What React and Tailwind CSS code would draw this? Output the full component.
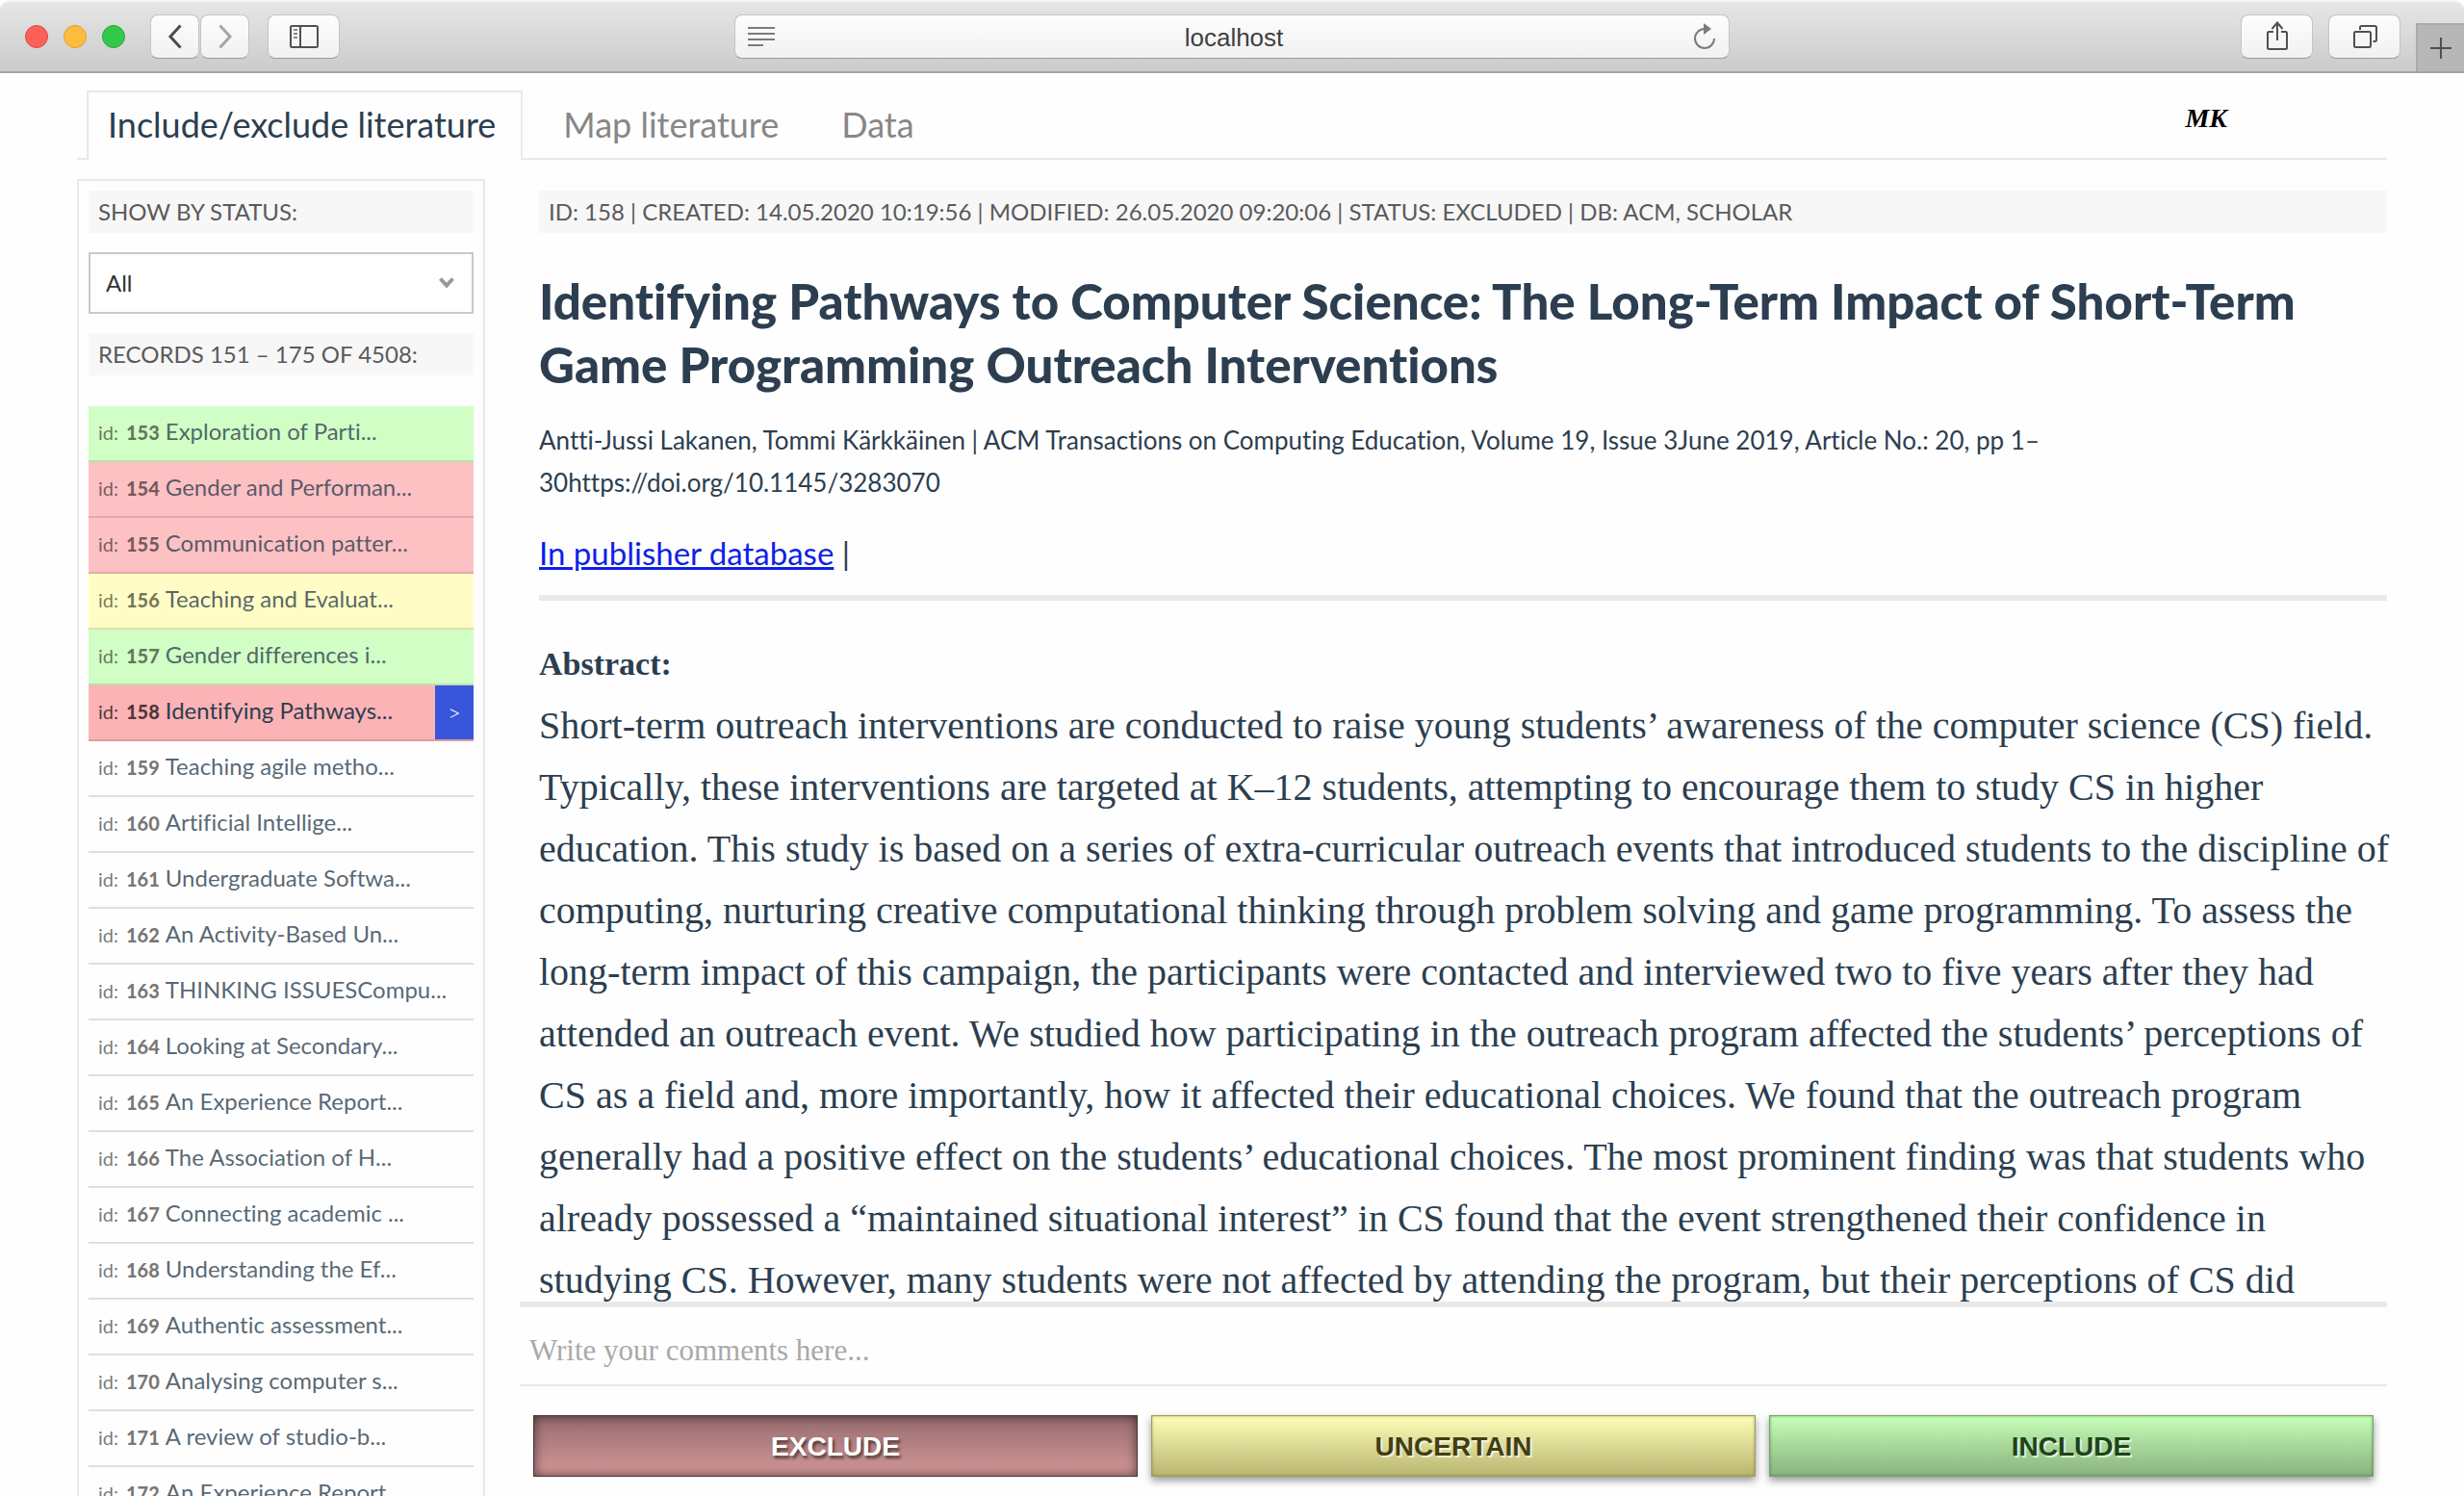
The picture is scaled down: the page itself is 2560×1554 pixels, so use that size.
import React, { useState } from "react";

const SANS = "font-['Lato','Liberation_Sans',sans-serif]";
const SERIF = "font-['Liberation_Serif',serif]";

const ROW_COLOURS = {
  included: "bg-[#d1fec5]",
  excluded: "bg-[#fdc1c4]",
  uncertain: "bg-[#fffdc5]",
  open: "",
};

const RECORDS = [
  [153, "Exploration of Parti...", "included"],
  [154, "Gender and Performan...", "excluded"],
  [155, "Communication patter...", "excluded"],
  [156, "Teaching and Evaluat...", "uncertain"],
  [157, "Gender differences i...", "included"],
  [158, "Identifying Pathways...", "excluded"],
  [159, "Teaching agile metho...", "open"],
  [160, "Artificial Intellige...", "open"],
  [161, "Undergraduate Softwa...", "open"],
  [162, "An Activity-Based Un...", "open"],
  [163, "THINKING ISSUESCompu...", "open"],
  [164, "Looking at Secondary...", "open"],
  [165, "An Experience Report...", "open"],
  [166, "The Association of H...", "open"],
  [167, "Connecting academic ...", "open"],
  [168, "Understanding the Ef...", "open"],
  [169, "Authentic assessment...", "open"],
  [170, "Analysing computer s...", "open"],
  [171, "A review of studio-b...", "open"],
  [172, "An Experience Report...", "open"],
];

const TOOL =
  "flex h-[46px] items-center justify-center rounded-[8px] border border-[#c4c4c4] border-b-[#9c9c9c] bg-linear-to-b from-[#fdfdfd] to-[#f1f1f1]";

function Toolbar() {
  return (
    <header className="grid h-[76px] shrink-0 grid-cols-[1fr_1034px_1fr] items-center rounded-t-[10px] border-t-2 border-b-2 border-t-[#f4f4f4] border-b-[#a3a3a3] bg-linear-to-b from-[#e6e6e6] to-[#cbcbcb]">
      <div className="flex items-center pl-[26px]">
        <div className="flex gap-4">
          <button aria-label="Close" className="size-6 rounded-full border border-[#e2463f] bg-[#fc605b]" />
          <button aria-label="Minimise" className="size-6 rounded-full border border-[#dfa023] bg-[#fdbc40]" />
          <button aria-label="Zoom" className="size-6 rounded-full border border-[#27a934] bg-[#34c84a]" />
        </div>
        <div className="ml-[26px] flex gap-px">
          <button aria-label="Back" className={`${TOOL} w-[51px]`}>
            <svg width="16" height="26" viewBox="0 0 16 26" fill="none" stroke="#4c4c4c" strokeWidth="3">
              <path d="M13.500 1.500 3 13l10.500 11.500" />
            </svg>
          </button>
          <button aria-label="Forward" className={`${TOOL} w-[51px]`}>
            <svg width="16" height="26" viewBox="0 0 16 26" fill="none" stroke="#a6a6a6" strokeWidth="3">
              <path d="M2.500 1.500 13 13 2.500 24.500" />
            </svg>
          </button>
        </div>
        <button aria-label="Show sidebar" className={`${TOOL} ml-[19px] w-[75px]`}>
          <svg width="30" height="24" viewBox="0 0 30 24" fill="none" stroke="#505050" strokeWidth="2">
            <rect x="1" y="1" width="28" height="22" rx="1.500" />
            <path d="M11 1v22" />
            <path d="M4 5h4M4 9h4M4 13h4" stroke="#8a8a8a" />
          </svg>
        </button>
      </div>

      <div className={`${TOOL} gap-4 px-[13px]`}>
        <svg width="28" height="20" viewBox="0 0 28 20" stroke="#7b7b7b" strokeWidth="2">
          <path d="M0 1h28M0 7h28M0 13h28M0 19h16" />
        </svg>
        <input
          aria-label="Address"
          defaultValue="localhost"
          className="min-w-0 flex-1 bg-transparent pt-[2px] text-center font-['Liberation_Sans',sans-serif] text-[26px] text-[#404040] outline-none"
        />
        <button aria-label="Reload">
          <svg width="24" height="28" viewBox="0 0 24 28" fill="none" stroke="#7b7b7b" strokeWidth="2">
            <path d="M12 6a10 10 0 1 0 10 10" />
            <path d="M11 0v12l8-6z" fill="#7b7b7b" stroke="none" />
          </svg>
        </button>
      </div>

      <div className="flex items-center justify-end gap-4 self-stretch">
        <button aria-label="Share" className={`${TOOL} w-[75px]`}>
          <svg width="24" height="32" viewBox="0 0 24 32" fill="none" stroke="#505050" strokeWidth="2">
            <path d="M8 11H3.500a1.500 1.500 0 0 0-1.500 1.500v15A1.500 1.500 0 0 0 3.500 29h17a1.500 1.500 0 0 0 1.500-1.500v-15a1.500 1.500 0 0 0-1.500-1.500H16" />
            <path d="M12 20V2M6.500 8 12 1.500 17.500 8" />
          </svg>
        </button>
        <button aria-label="Show all tabs" className={`${TOOL} w-[75px]`}>
          <svg width="26" height="24" viewBox="0 0 26 24" fill="none" stroke="#505050" strokeWidth="2">
            <rect x="2" y="7" width="17" height="16" rx="1.500" />
            <path d="M8 5V2.500A1.500 1.500 0 0 1 9.500 1h14A1.500 1.500 0 0 1 25 2.500v13a1.500 1.500 0 0 1-1.500 1.500H21.500" />
          </svg>
        </button>
        <button
          aria-label="New tab"
          className="flex h-[50px] w-[50px] items-center justify-center self-end border-t-2 border-l-2 border-[#aaaaaa] bg-[#b7b7b7]"
        >
          <svg width="22" height="22" viewBox="0 0 22 22" stroke="#505050" strokeWidth="2">
            <path d="M11 0v22M0 11h22" />
          </svg>
        </button>
      </div>
    </header>
  );
}

const TAB = "pb-[2px] leading-[66px]";

function Tabs() {
  return (
    <nav className="flex items-stretch gap-[19px] border-b-2 border-[#e9e9e9] pl-[10px] text-4xl text-[#878787]">
      <a href="#screen" aria-current="page" className={`${TAB} -mb-[2px] border-2 border-b-0 border-[#e9e9e9] bg-[#fefefe] pr-[26px] pl-5 text-[#2c3e50]`}>
        Include/exclude literature
      </a>
      <a href="#map" className={`${TAB} px-[23px] pt-[2px]`}>Map literature</a>
      <a href="#data" className={`${TAB} px-[23px] pt-[2px]`}>Data</a>
      <span className={`${SERIF} mr-[166px] ml-auto text-[28px] leading-[58px] font-bold text-black italic`}>MK</span>
    </nav>
  );
}

const CAPTION = "block bg-[#f7f7f7] px-[10px] text-2xl leading-[44px] text-[#5a5a5a]";

function Sidebar({ current, onSelect }) {
  return (
    <aside className="w-[424px] shrink-0 overflow-hidden border-2 border-b-0 border-[#e9e9e9] p-[10px]">
      <label htmlFor="status" className={CAPTION}>SHOW BY STATUS:</label>
      <div className="relative my-5">
        <select
          id="status"
          className="h-16 w-full appearance-none border-2 border-[#c9c9c9] bg-white px-4 text-2xl text-[#333333]"
        >
          <option>All</option>
          <option>Included</option>
          <option>Excluded</option>
          <option>Uncertain</option>
        </select>
        <svg className="pointer-events-none absolute top-[25px] right-5" width="16" height="14" viewBox="0 0 16 14" fill="none" stroke="#999999" strokeWidth="4">
          <path d="M1.500 2.500 8 9.500l6.500-7" />
        </svg>
      </div>
      <h2 className={CAPTION}>RECORDS 151 – 175 OF 4508:</h2>
      <ul className="mt-8">
        {RECORDS.map(([id, title, status]) => {
          const active = id === current;
          return (
            <li key={id} className={`border-b-2 border-black/12 ${active ? "bg-[#fcb3b5]" : ROW_COLOURS[status]}`}>
              <button onClick={() => onSelect(id)} className="flex h-14 w-full items-stretch pl-[10px] text-left">
                <span className={`flex flex-1 items-baseline text-xl leading-[52px] ${active ? "text-black/70" : "text-black/54"}`}>
                  id:
                  <span className="ml-2 font-black">{id}</span>
                  <span className={`ml-[6px] text-2xl leading-[52px] ${active ? "text-[#2c3e50]" : "text-[#2c3e50]/80"}`}>{title}</span>
                </span>
                {active && <span className="w-10 bg-[#3955db] text-center text-2xl leading-[56px] font-light text-white">&gt;</span>}
              </button>
            </li>
          );
        })}
      </ul>
    </aside>
  );
}

function Article() {
  return (
    <article className="-mr-4 min-h-0 flex-1 overflow-hidden pt-3 pr-4 pl-5 text-[#2c3e50]">
      <p className={CAPTION}>
        ID: 158 | CREATED: 14.05.2020 10:19:56 | MODIFIED: 26.05.2020 09:20:06 | STATUS: EXCLUDED | DB: ACM, SCHOLAR
      </p>
      <h1 className="mt-[38px] text-[51px] leading-[66px] font-black">
        Identifying Pathways to Computer Science: The Long-Term Impact of Short-Term Game Programming Outreach
        Interventions
      </h1>
      <p className="mt-[23px] pr-[300px] text-[26px] leading-[44px]">
        Antti-Jussi Lakanen, Tommi Kärkkäinen | ACM Transactions on Computing Education, Volume 19, Issue 3June 2019,
        Article No.: 20, pp 1–30https://doi.org/10.1145/3283070
      </p>
      <p className="mt-6 border-b-6 border-[#e9e9e9] pb-[17px] text-[33px] leading-[54px]">
        <a href="#publisher" className="text-[#0f1fe8] underline">In publisher database</a> |
      </p>
      <section className={`${SERIF} -mr-2 pt-[34px] leading-[64px]`}>
        <h2 className="text-[34px] font-bold">Abstract:</h2>
        <p className="text-[40px]">
          Short-term outreach interventions are conducted to raise young students’ awareness of the computer science
          (CS) field. Typically, these interventions are targeted at K–12 students, attempting to encourage them to
          study CS in higher education. This study is based on a series of extra-curricular outreach events that
          introduced students to the discipline of computing, nurturing creative computational thinking through problem
          solving and game programming. To assess the long-term impact of this campaign, the participants were contacted
          and interviewed two to five years after they had attended an outreach event. We studied how participating in
          the outreach program affected the students’ perceptions of CS as a field and, more importantly, how it
          affected their educational choices. We found that the outreach program generally had a positive effect on the
          students’ educational choices. The most prominent finding was that students who already possessed a
          “maintained situational interest” in CS found that the event strengthened their confidence in studying CS.
          However, many students were not affected by attending the program, but their perceptions of CS did
        </p>
      </section>
    </article>
  );
}

const VERDICT =
  "h-16 flex-1 border pt-[2px] font-['Liberation_Sans',sans-serif] text-[28px] leading-none font-bold";

function Verdict() {
  return (
    <footer className="border-t-6 border-[#e9e9e9]">
      <input
        aria-label="Comments"
        placeholder="Write your comments here..."
        className={`${SERIF} block h-[82px] w-full border-b-2 border-[#e9e9e9] px-[10px] pt-[10px] text-[31px] text-[#2c3e50] outline-none placeholder:text-[#a9a9a9]`}
      />
      <div className="flex gap-[14px] px-[14px] pt-[30px] pb-5">
        <button
          aria-pressed="true"
          className={`${VERDICT} border-[#4d3638] bg-linear-to-b from-[#976c6f] to-[#d49898] text-white shadow-[inset_0_0_12px_rgba(0,0,0,0.6)] text-shadow-[2px_3px_3px_rgba(0,0,0,0.55)]`}
        >
          EXCLUDE
        </button>
        <button
          className={`${VERDICT} border-[#a09d62] bg-linear-to-b from-[#ffffb9] to-[#b9b571] text-[#433e10] shadow-[0_4px_8px_rgba(0,0,0,0.4),inset_0_0_3px_rgba(90,90,20,0.5)] text-shadow-[2px_2px_1px_rgba(255,255,255,0.7)]`}
        >
          UNCERTAIN
        </button>
        <button
          className={`${VERDICT} border-[#76a36b] bg-linear-to-b from-[#c7ffb8] to-[#88b27e] text-[#1f4416] shadow-[0_4px_8px_rgba(0,0,0,0.4),inset_0_0_3px_rgba(20,90,20,0.5)] text-shadow-[2px_2px_1px_rgba(255,255,255,0.7)]`}
        >
          INCLUDE
        </button>
      </div>
    </footer>
  );
}

export default function App() {
  const [current, setCurrent] = useState(158);
  return (
    <div className={`${SANS} flex h-screen flex-col overflow-hidden bg-[#fefefe] [font-variant-ligatures:none]`}>
      <Toolbar />
      <div className="flex min-h-0 flex-1 flex-col px-20 pt-[18px]">
        <Tabs />
        <div className="mt-5 flex min-h-0 flex-1 gap-9">
          <Sidebar current={current} onSelect={setCurrent} />
          <main className="flex min-w-0 flex-1 flex-col">
            <Article />
            <Verdict />
          </main>
        </div>
      </div>
    </div>
  );
}
